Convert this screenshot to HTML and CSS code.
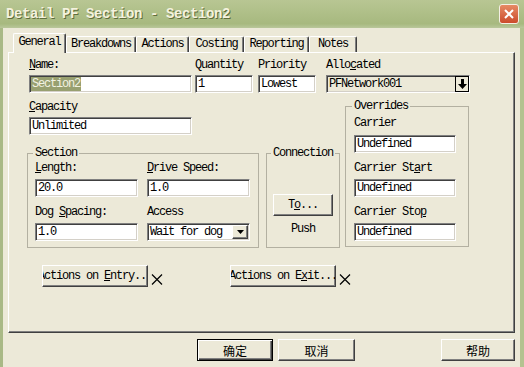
FILE: index.html
```html
<!DOCTYPE html>
<html lang="en">
<head>
    <meta charset="UTF-8">
    <title>Detail PF Section - Section2</title>
    <link rel="stylesheet" href="styles.css">
</head>
<body>
    <div class="window">
        <div class="titlebar">
            <span class="title">Detail PF Section - Section2</span>
            <span class="close">
                <svg viewBox="0 0 18 18" width="18" height="18">
                    <path d="M5 5L13 13M13 5L5 13" stroke="#fff" stroke-width="2"/>
                </svg>
            </span>
        </div>

        <div class="client">
            <div class="tabs">
                <span class="tab active t-general">General</span>
                <span class="tab t-break">Breakdowns</span>
                <span class="tab t-actions">Actions</span>
                <span class="tab t-costing">Costing</span>
                <span class="tab t-report">Reporting</span>
                <span class="tab t-notes">Notes</span>
            </div>

            <div class="panel">
                <div class="row-top">
                    <div class="field f-name">
                        <label><u>N</u>ame:</label>
                        <div class="edit"><span class="sel">Section2</span></div>
                    </div>
                    <div class="field f-qty">
                        <label>Quantity</label>
                        <div class="edit">1</div>
                    </div>
                    <div class="field f-pri">
                        <label>Priority</label>
                        <div class="edit">Lowest</div>
                    </div>
                    <div class="field f-alloc">
                        <label>Allo<u>c</u>ated</label>
                        <div class="edit combo readonly">
                            <span>PFNetwork001</span>
                            <span class="drop-alloc">
                                <svg viewBox="0 0 9 10" width="9" height="10">
                                    <path d="M3 0H6V5H9L4.5 10L0 5H3Z" fill="#000"/>
                                </svg>
                            </span>
                        </div>
                    </div>
                </div>

                <div class="row-mid">
                    <div class="col-left">
                        <div class="field f-capacity">
                            <label><u>C</u>apacity</label>
                            <div class="edit">Unlimited</div>
                        </div>

                        <div class="groups">
                            <fieldset class="group section">
                                <legend>Section</legend>
                                <div class="grid2">
                                    <div class="field">
                                        <label><u>L</u>ength:</label>
                                        <div class="edit">20.0</div>
                                    </div>
                                    <div class="field">
                                        <label><u>D</u>rive Speed:</label>
                                        <div class="edit">1.0</div>
                                    </div>
                                    <div class="field">
                                        <label>Dog <u>S</u>pacing:</label>
                                        <div class="edit">1.0</div>
                                    </div>
                                    <div class="field">
                                        <label>Access</label>
                                        <div class="edit combo">
                                            <span>Wait for dog</span>
                                            <span class="combo-btn">
                                                <svg viewBox="0 0 7 4" width="7" height="4">
                                                    <path d="M0 0H7L3.5 4Z" fill="#000"/>
                                                </svg>
                                            </span>
                                        </div>
                                    </div>
                                </div>
                            </fieldset>

                            <fieldset class="group connection">
                                <legend>Connection</legend>
                                <div class="btn to-btn">T<u>o</u>...</div>
                                <div class="push">Push</div>
                            </fieldset>
                        </div>
                    </div>

                    <fieldset class="group overrides">
                        <legend>Overrides</legend>
                        <div class="field carrier">
                            <label>Carrier</label>
                            <div class="edit">Undefined</div>
                        </div>
                        <div class="field">
                            <label>Carrier St<u>a</u>rt</label>
                            <div class="edit">Undefined</div>
                        </div>
                        <div class="field">
                            <label>Carrier Sto<u>p</u></label>
                            <div class="edit">Undefined</div>
                        </div>
                    </fieldset>
                </div>

                <div class="row-actions">
                    <div class="btn act-btn entry"><span>Actions on <u>E</u>ntry...</span></div>
                    <svg class="xmark" viewBox="0 0 12 11" width="12" height="11">
                        <path d="M1 0.5L11 10.5M11 0.5L1 10.5" stroke="#000" stroke-width="1.2"/>
                    </svg>
                    <div class="btn act-btn exit"><span>Actions on E<u>x</u>it...</span></div>
                    <svg class="xmark" viewBox="0 0 12 11" width="12" height="11">
                        <path d="M1 0.5L11 10.5M11 0.5L1 10.5" stroke="#000" stroke-width="1.2"/>
                    </svg>
                </div>
            </div>

            <div class="buttons">
                <div class="btn cjk default">确定</div>
                <div class="btn cjk cancel">取消</div>
                <div class="btn cjk help">帮助</div>
            </div>
        </div>
    </div>
</body>
</html>
```

FILE: styles.css
```css
:root {
    --face: #ece9d8;
    --frame: #a9b986;
}

* {
    box-sizing: border-box;
}

body {
    margin: 0;
    background: var(--face);
    font-family: "Liberation Mono", "Noto Sans CJK SC", monospace;
    font-size: 12px;
    letter-spacing: -1.2px;
    color: #000;
}

.window {
    width: 524px;
    height: 367px;
    display: flex;
    flex-direction: column;
    overflow: hidden;
}

/* title bar */
.titlebar {
    height: 28px;
    flex: none;
    display: flex;
    align-items: center;
    justify-content: space-between;
    padding: 0 5px 0 6px;
    background: linear-gradient(#b8c693, #a7b97f 85%, #b9c79a);
}

.title {
    font-size: 14px;
    font-weight: bold;
    letter-spacing: -0.4px;
    color: #f4f2de;
    text-shadow: 1px 1px #5f6d3c;
}

.close {
    width: 20px;
    height: 20px;
    border: 1px solid #f4efe4;
    border-radius: 3px;
    background: linear-gradient(#e68a64, #cc4c2c);
    display: grid;
    place-items: center;
}

/* client area */
.client {
    flex: 1;
    border-left: 3px solid var(--frame);
    border-right: 4px solid #b4c290;
    padding: 5px 5px 0 5px;
}

.tabs {
    display: flex;
    align-items: flex-end;
    height: 19px;
    padding-left: 5px;
}

.tab {
    height: 16px;
    border: 1px solid #fff;
    border-bottom: none;
    border-right-color: #404040;
    border-radius: 2px 2px 0 0;
    box-shadow: inset -1px 0 #808080;
    text-align: center;
    line-height: 14px;
    white-space: nowrap;
}

.tab.active {
    height: 20px;
    margin-bottom: -1px;
    position: relative;
    z-index: 1;
    background: var(--face);
    line-height: 16px;
}

.t-general { width: 53px; }
.t-break { width: 70px; }
.t-actions { width: 53px; }
.t-costing { width: 55px; }
.t-report { width: 65px; }
.t-notes { width: 48px; }

.panel {
    height: 281px;
    border: 1px solid;
    border-color: #fff #404040 #404040 #fff;
    box-shadow: inset -1px -1px #808080;
    padding: 6px 0 0 18px;
}

/* fields */
.field label {
    display: block;
    height: 13px;
    line-height: 13px;
    margin-bottom: 3px;
    white-space: nowrap;
}

.edit {
    height: 18px;
    border: 1px solid;
    border-color: #808080 #fff #fff #808080;
    box-shadow: inset 1px 1px #404040, inset -1px -1px #d4d0c8;
    background: #fff;
    padding: 0 2px;
    line-height: 16px;
    white-space: nowrap;
    overflow: hidden;
}

.sel {
    margin-left: -1px;
    padding: 0 1px;
    background: #98a070;
    color: #f2f2e2;
}

.combo {
    display: flex;
    align-items: center;
    justify-content: space-between;
    padding-right: 1px;
}

.combo.readonly {
    background: var(--face);
    padding-right: 0;
}

.drop-alloc {
    width: 14px;
    height: 16px;
    border: 1px solid #000;
    display: grid;
    place-items: center;
}

.combo-btn {
    width: 16px;
    height: 14px;
    background: var(--face);
    border: 1px solid;
    border-color: #fff #404040 #404040 #fff;
    box-shadow: inset -1px -1px #808080;
    display: grid;
    place-items: center;
}

.row-top {
    display: flex;
}

.f-name { width: 163px; margin-left: 2px; }
.f-qty { width: 58px; margin-left: 3px; }
.f-pri { width: 58px; margin-left: 5px; }
.f-alloc { width: 144px; margin-left: 10px; }

.row-mid {
    display: flex;
    align-items: flex-start;
    margin-top: 7px;
}

.col-left {
    width: 313px;
}

.f-capacity {
    width: 163px;
    margin: 1px 0 0 2px;
}

.groups {
    display: flex;
    gap: 7px;
    margin-top: 12px;
}

/* group boxes */
.group {
    margin: 0;
    min-width: 0;
    border: 1px solid #b3b0a1;
}

.group legend {
    padding: 0 2px;
    margin-left: -2px;
    height: 13px;
    line-height: 13px;
}

.group .field label {
    margin-bottom: 4px;
}

.section {
    padding: 2px 8px 6px 7px;
}

.grid2 {
    display: grid;
    grid-template-columns: 103px 103px;
    column-gap: 9px;
    row-gap: 9px;
}

.connection {
    width: 74px;
    padding: 0 6px;
    display: flex;
    flex-direction: column;
    align-items: center;
}

.to-btn {
    width: 60px;
    margin-top: 34px;
}

.push {
    margin-top: 7px;
    line-height: 13px;
}

.overrides {
    width: 124px;
    margin-left: 5px;
    padding: 4px 12px 5px 8px;
}

.overrides .field + .field {
    margin-top: 9px;
}

.overrides .carrier label {
    margin-bottom: 5px;
}

/* buttons */
.btn {
    height: 22px;
    background: var(--face);
    border: 1px solid;
    border-color: #fff #404040 #404040 #fff;
    box-shadow: inset -1px -1px #808080;
    display: flex;
    align-items: center;
    justify-content: center;
    overflow: hidden;
    white-space: nowrap;
}

.row-actions {
    display: flex;
    align-items: center;
    margin-top: 17px;
}

.act-btn {
    width: 106px;
}

.act-btn span {
    flex: none;
}

.entry { margin-left: 15px; }
.exit { margin-left: 67px; }

.xmark {
    margin-left: 3px;
    align-self: flex-end;
    margin-bottom: 2px;
}

.buttons {
    display: flex;
    margin-top: 6px;
}

.cjk {
    font-family: "Noto Sans CJK SC", sans-serif;
    letter-spacing: 0;
    font-size: 12px;
}

.default {
    width: 76px;
    margin-left: 189px;
    border-color: #000;
    box-shadow: inset 1px 1px #fff, inset -1px -1px #404040, inset -2px -2px #808080;
}

.cancel {
    width: 77px;
    margin-left: 5px;
}

.help {
    width: 74px;
    margin-left: auto;
}
```
